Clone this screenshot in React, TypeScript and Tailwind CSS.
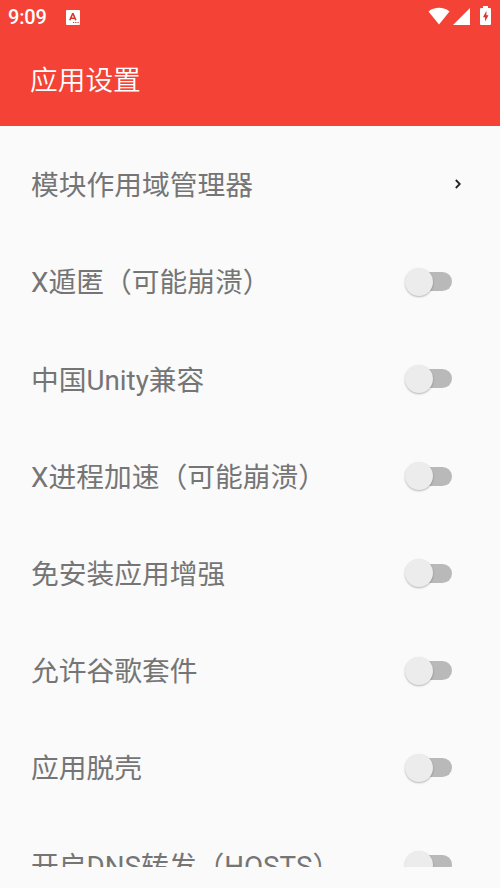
const settings = [
  { title: "模块作用域管理器", type: "link" },
  { title: "X遁匿（可能崩溃）", type: "switch" },
  { title: "中国Unity兼容", type: "switch" },
  { title: "X进程加速（可能崩溃）", type: "switch" },
  { title: "免安装应用增强", type: "switch" },
  { title: "允许谷歌套件", type: "switch" },
  { title: "应用脱壳", type: "switch" },
  { title: "开启DNS转发（HOSTS）", type: "switch" },
];

const StatusBar = () => {
  return (
    <div className="flex h-8 items-center pl-2 pr-[9px] text-white">
      <span className="w-[39px] pt-[2px] text-[20px] leading-none font-medium tracking-[-0.2px]">
        9:09
      </span>
      <svg viewBox="0 0 14 15" className="ml-[19px] mt-[2px] h-[15px] w-[14px]">
        <rect width="14" height="15" rx="1" fill="#fff" />
        <path
          d="M3.8 10.3 6.6 3.7h.5l2.8 6.6M5 8.2h3.8"
          fill="none"
          stroke="#d9362c"
          strokeWidth="1.6"
        />
        <path d="M7 12h1.2v1H7zM9.2 12h1.2v1H9.2zM11.4 12h1.2v1h-1.2z" fill="#d9362c" />
      </svg>
      <div className="ml-auto flex items-start">
        <svg viewBox="0 0 22 18" className="h-[18px] w-[22px]" fill="#fff">
          <path d="M0.5 4.4C6.2-.4 15.8-.4 21.500 4.400L11 17.600z" />
        </svg>
        <svg viewBox="0 0 17 17" className="ml-[3px] mt-px h-[17px] w-[17px]" fill="#fff">
          <path d="M17 0v17H0z" />
        </svg>
        <svg viewBox="0 0 11 19" className="ml-[10px] -mt-px h-[19px] w-[11px]">
          <path
            d="M3 0h5v2h2q1 0 1 1v15q0 1-1 1H1q-1 0-1-1V3q0-1 1-1h2z"
            fill="#fff"
          />
          <path d="M6.400 4.800 3 11.300h2.100v4.200l3.400-6.300H6.400z" fill="#d9362c" />
        </svg>
      </div>
    </div>
  );
};

const Switch = () => {
  return (
    <button
      role="switch"
      aria-checked="false"
      className="mr-4 flex h-7 w-[47px] shrink-0 items-center"
    >
      <span className="size-7 z-10 shrink-0 rounded-full bg-[#ececec] shadow-[0_1px_2px_rgba(0,0,0,0.28)]" />
      <span className="-ml-6 h-[19px] w-[43px] shrink-0 rounded-full bg-[#b9b9b9]" />
    </button>
  );
};

const App = () => {
  return (
    <div className="flex h-[888px] w-[500px] flex-col overflow-hidden bg-[#fafafa] font-[Roboto,'Noto_Sans_CJK_SC',sans-serif]">
      <header className="h-[126px] shrink-0 bg-[#f44336]">
        <StatusBar />
        <h1 className="flex h-[94px] items-center pt-1 pl-[30px] text-[27.7px] leading-none font-[350] text-white">
          应用设置
        </h1>
      </header>
      <ul className="h-[741px] shrink-0 overflow-hidden pt-[10px]">
        {settings.map((item) => (
          <li
            key={item.title}
            className="flex h-[97.2px] items-center justify-between pl-[31px] pr-8 text-[#757575]"
          >
            <span className="pt-[3px] text-[27.75px] leading-none whitespace-nowrap">
              {item.title}
            </span>
            {item.type === "switch" ? (
              <Switch />
            ) : (
              <svg viewBox="0 0 6 10" className="mr-[7px] mb-px h-[10px] w-[6px]">
                <path
                  d="M.8 1 4.800 5l-4 4"
                  fill="none"
                  stroke="#222"
                  strokeWidth="1.8"
                />
              </svg>
            )}
          </li>
        ))}
      </ul>
    </div>
  );
};

export default App;
